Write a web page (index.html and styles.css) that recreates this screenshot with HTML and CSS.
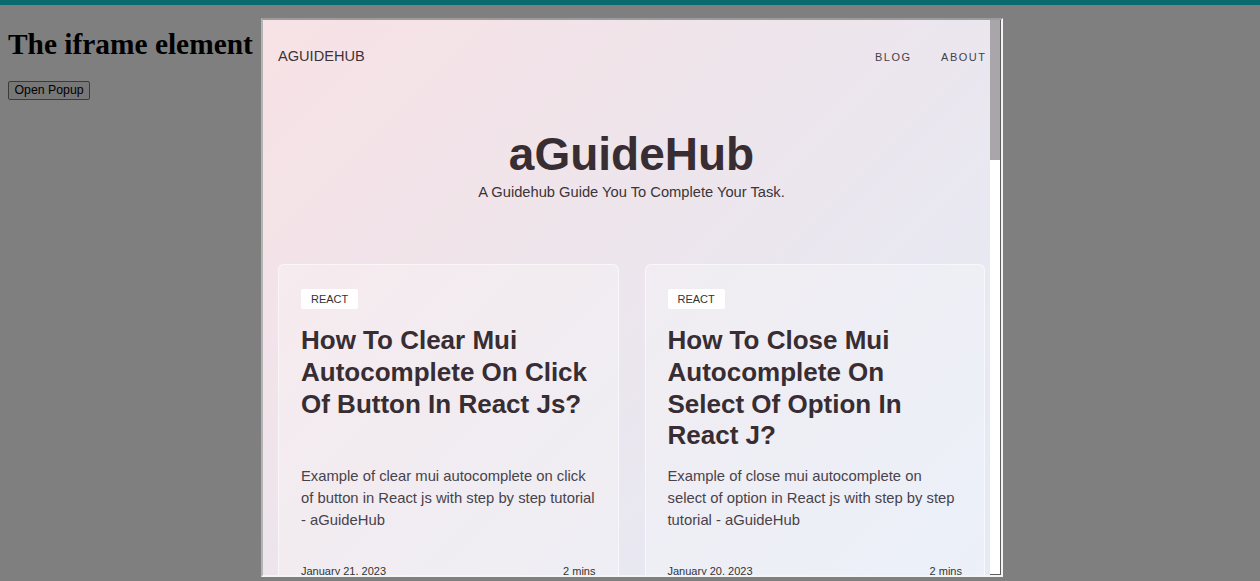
FILE: index.html
```html
<!DOCTYPE html>
<html lang="en">
<head>
<meta charset="utf-8">
<title>The iframe element</title>
<link rel="stylesheet" href="styles.css">
</head>
<body>
<div class="topbar"></div>
<h1 class="page-title">The iframe element</h1>
<button class="open-btn" type="button">Open Popup</button>

<div class="overlay"></div>

<div class="popup">
  <div class="site">
    <header class="nav">
      <span class="logo">AGUIDEHUB</span>
      <nav class="links">
        <span class="link">BLOG</span>
        <span class="link">ABOUT</span>
      </nav>
    </header>
    <section class="hero">
      <h2 class="hero-title">aGuideHub</h2>
      <p class="hero-sub">A Guidehub Guide You To Complete Your Task.</p>
    </section>
    <div class="cards">
      <article class="card">
        <span class="tag">REACT</span>
        <h3 class="card-title">How To Clear Mui Autocomplete On Click Of Button In React Js?</h3>
        <p class="card-desc">Example of clear mui autocomplete on click of button in React js with step by step tutorial - aGuideHub</p>
        <div class="card-meta"><span>January 21, 2023</span><span>2 mins</span></div>
      </article>
      <article class="card">
        <span class="tag">REACT</span>
        <h3 class="card-title">How To Close Mui Autocomplete On Select Of Option In React J?</h3>
        <p class="card-desc">Example of close mui autocomplete on select of option in React js with step by step tutorial - aGuideHub</p>
        <div class="card-meta"><span>January 20, 2023</span><span>2 mins</span></div>
      </article>
    </div>
  </div>
  <div class="scrollbar"><div class="thumb"></div></div>
</div>
</body>
</html>
```

FILE: styles.css
```css
html, body {
  background: #ffffff;
}
body {
  margin: 8px;
  font-family: "Liberation Serif", "Times New Roman", serif;
  color: #000;
}
.topbar {
  position: fixed;
  top: 0;
  left: 0;
  right: 0;
  height: 5px;
  background: #0b6a6e;
  z-index: 3;
}
.page-title {
  font-size: 29.4px;
  font-weight: bold;
  margin: 19.5px 0 19.7px;
}
.open-btn {
  font-family: "Liberation Sans", Arial, sans-serif;
  font-size: 12.3px;
  line-height: 15px;
  padding: 1px 5.5px;
  background: #efefef;
  border: 1px solid #767676;
  border-radius: 2px;
  color: #000;
}
.overlay {
  position: fixed;
  inset: 0;
  background: rgba(0, 0, 0, 0.5);
  z-index: 1;
}
.popup {
  position: fixed;
  left: 261px;
  top: 18px;
  width: 742px;
  height: 559px;
  box-sizing: border-box;
  border: 2px solid;
  border-color: #9c9c9c #f4f4f4 #f4f4f4 #b4b4b4;
  display: flex;
  z-index: 2;
  background: #fff;
}
.site {
  flex: 1;
  overflow: hidden;
  padding: 0 5px 0 15px;
  background: linear-gradient(135deg, #f8e2e5 0%, #ede5ec 45%, #e4ebf7 100%);
  font-family: "Liberation Sans", Arial, sans-serif;
  color: #372d32;
}
.scrollbar {
  width: 10px;
  background: #ffffff;
  border-right: 1px solid #5e5e5e;
  border-bottom: 1px solid #5e5e5e;
  display: flex;
  flex-direction: column;
}
.thumb {
  height: 140px;
  background: #a9a6a9;
}
.nav {
  display: flex;
  justify-content: space-between;
  align-items: center;
  padding-top: 26px;
  height: 20px;
}
.logo {
  font-size: 14.6px;
  line-height: 20px;
  color: #3b3337;
}
.links {
  display: flex;
  gap: 31px;
  margin-top: 2px;
}
.link {
  font-size: 11px;
  letter-spacing: 1.5px;
  color: #45404a;
  margin-right: -1.5px;
}
.hero {
  text-align: center;
  padding-top: 64px;
}
.hero-title {
  margin: 0;
  font-size: 46px;
  line-height: 48px;
  font-weight: bold;
  color: #372d32;
}
.hero-sub {
  margin: 4px 0 0;
  font-size: 14.7px;
  line-height: 20px;
  color: #3b3438;
}
.cards {
  display: grid;
  grid-template-columns: 1fr 1fr;
  gap: 26px;
  margin-top: 62px;
  align-items: start;
}
.card {
  border: 1px solid rgba(255, 255, 255, 0.55);
  border-radius: 6px;
  background: rgba(255, 255, 255, 0.28);
  padding: 24px 22px 30px;
}
.tag {
  display: inline-block;
  background: #ffffff;
  font-size: 11px;
  line-height: 14px;
  padding: 3px 10px;
  border-radius: 2px;
  color: #333;
}
.card-title {
  margin: 16.4px 0 0;
  font-size: 26px;
  line-height: 31.6px;
  min-height: 126.4px;
  font-weight: bold;
  color: #372d32;
}
.card-desc {
  margin: 13.2px 0 0;
  font-size: 14.8px;
  line-height: 22px;
  color: #48424a;
}
.card-meta {
  margin-top: 34.5px;
  display: flex;
  justify-content: space-between;
  font-size: 11px;
  line-height: 13px;
  color: #333;
}
```
